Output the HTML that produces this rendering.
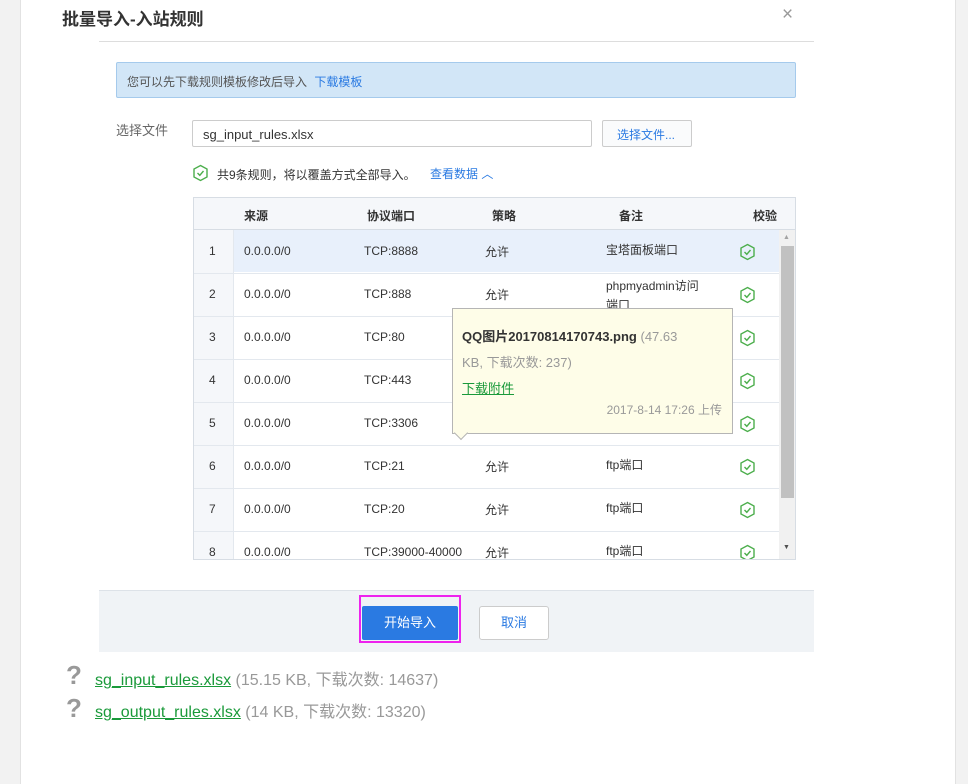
<!DOCTYPE html>
<html><head><meta charset="utf-8"><style>
*{box-sizing:border-box;margin:0;padding:0}
body{width:968px;height:784px;position:relative;background:#fff;font-family:"Liberation Sans","Noto Sans CJK SC",sans-serif;font-size:12px;color:#333;overflow:hidden}
.a{position:absolute}
.hex{position:absolute;width:17px;height:18px}
</style></head><body>
<div class="a" style="left:0;top:0;width:21px;height:784px;background:#f2f2f2;border-right:1px solid #e2e2e2"></div>
<div class="a" style="left:955px;top:0;width:13px;height:784px;background:#f2f2f2;border-left:1px solid #e2e2e2"></div>

<div class="a" style="left:62px;top:5px;font-size:17px;font-weight:bold;color:#333">批量导入-入站规则</div>
<div class="a" style="left:782px;top:4px;font-size:19px;color:#999">×</div>
<div class="a" style="left:99px;top:41px;width:715px;height:1px;background:#ddd"></div>

<div class="a" style="left:116px;top:62px;width:680px;height:36px;background:#d2e6f7;border:1px solid #a5caec;border-radius:2px;padding:10px 0 0 10px;color:#555">您可以先下载规则模板修改后导入 <span style="color:#2a7ae2;margin-left:4px">下载模板</span></div>

<div class="a" style="left:116px;top:120px;font-size:13px;color:#666">选择文件</div>
<div class="a" style="left:192px;top:120px;width:400px;height:27px;border:1px solid #ccc;border-radius:2px;padding:6px 0 0 10px;font-size:13px;color:#333">sg_input_rules.xlsx</div>
<div class="a" style="left:602px;top:120px;width:90px;height:27px;border:1px solid #ccc;border-radius:2px;background:#fafbfc;padding:5px 0 0 14px;color:#2a7ae2">选择文件...</div>

<svg class="hex" style="left:192px;top:164px" viewBox="0 0 17 18"><path d="M8.5 1.5 L15 5 V13 L8.5 16.5 L2 13 V5 Z" fill="none" stroke="#4cae4c" stroke-width="1.4"/><path d="M5.5 9 L7.8 11.3 L11.5 7" fill="none" stroke="#4cae4c" stroke-width="1.4"/></svg>
<div class="a" style="left:217px;top:166px;color:#333">共9条规则，将以覆盖方式全部导入。</div>
<div class="a" style="left:430px;top:165px;color:#2a7ae2">查看数据 ︿</div>

<div class="a" style="left:193px;top:197px;width:603px;height:363px;border:1px solid #d7dde4;background:#fff;overflow:hidden">
 <div class="a" style="left:0;top:0;width:40px;height:363px;background:#f5f7fa;border-right:1px solid #e3e8ee"></div>
 <div class="a" style="left:0;top:0;width:603px;height:32px;background:#f5f7fa;border-bottom:1px solid #d7dde4"></div>
 <div class="a" style="left:40px;top:32px;width:545px;height:42px;background:#e8f0fb"></div>
 <div class="a" style="top:9px;left:50px;font-weight:bold">来源</div>
 <div class="a" style="top:9px;left:173px;font-weight:bold">协议端口</div>
 <div class="a" style="top:9px;left:298px;font-weight:bold">策略</div>
 <div class="a" style="top:9px;left:425px;font-weight:bold">备注</div>
 <div class="a" style="top:9px;left:559px;font-weight:bold">校验</div>
 <div id="rows"></div>
 <div class="a" style="left:585px;top:32px;width:17px;height:331px;background:#f1f1f1"></div>
 <div class="a" style="left:587px;top:48px;width:13px;height:252px;background:#c1c1c1"></div>
 <div class="a" style="left:589px;top:36px;font-size:7px;color:#a3a3a3">▲</div>
 <div class="a" style="left:589px;top:346px;font-size:7px;color:#505050">▼</div>
</div>

<div class="a" style="left:452px;top:308px;width:281px;height:126px;background:#fefde8;border:1px solid #b5b5b5;padding:15px 0 0 9px;line-height:26px;color:#999;font-size:13px">
<b style="color:#333">QQ图片20170814170743.png</b> (47.63<br>KB, 下载次数: 237)<br><span style="color:#1a9a3a;text-decoration:underline">下载附件</span>
<div style="position:absolute;right:10px;top:88px;font-size:12px">2017-8-14 17:26 上传</div>
</div>
<div class="a" style="left:456px;top:428px;width:10px;height:10px;background:#fefde8;border-right:1px solid #b5b5b5;border-bottom:1px solid #b5b5b5;transform:rotate(45deg)"></div>

<div class="a" style="left:99px;top:590px;width:715px;height:62px;background:#f0f3f6;border-top:1px solid #dde2e8"></div>
<div class="a" style="left:359px;top:595px;width:102px;height:48px;border:2px solid #ee22ee"></div>
<div class="a" style="left:362px;top:606px;width:96px;height:34px;background:#2a7ae2;border-radius:2px;color:#fff;font-size:13px;text-align:center;line-height:34px">开始导入</div>
<div class="a" style="left:479px;top:606px;width:70px;height:34px;background:#fff;border:1px solid #ccc;border-radius:3px;color:#2a7ae2;font-size:13px;text-align:center;line-height:32px">取消</div>

<div class="a" style="left:66px;top:662px;font-size:26px;font-weight:bold;color:#999;line-height:26px">?</div>
<div class="a" style="left:66px;top:695px;font-size:26px;font-weight:bold;color:#999;line-height:26px">?</div>
<div class="a" style="left:95px;top:666px;font-size:16px;color:#999"><span style="color:#1a9a3a;text-decoration:underline">sg_input_rules.xlsx</span> (15.15 KB, 下载次数: 14637)</div>
<div class="a" style="left:95px;top:698px;font-size:16px;color:#999"><span style="color:#1a9a3a;text-decoration:underline">sg_output_rules.xlsx</span> (14 KB, 下载次数: 13320)</div>

<script>
var d=[["TCP:8888","宝塔面板端口"],["TCP:888","phpmyadmin访问<br>端口"],["TCP:80",""],["TCP:443",""],["TCP:3306",""],["TCP:21","ftp端口"],["TCP:20","ftp端口"],["TCP:39000-40000","ftp端口"]];
var h="";
for(var i=0;i<8;i++){var t=32+i*43;var c=t+21;
h+='<div class="a" style="left:0;top:'+(t+43)+'px;width:585px;height:1px;background:#e3e8ee"></div>';
h+='<div class="a" style="left:15px;top:'+(c-7)+'px">'+(i+1)+'</div>';
h+='<div class="a" style="left:50px;top:'+(c-7)+'px">0.0.0.0/0</div>';
h+='<div class="a" style="left:170px;top:'+(c-7)+'px">'+d[i][0]+'</div>';
h+='<div class="a" style="left:291px;top:'+(c-8)+'px">允许</div>';
h+='<div class="a" style="left:412px;top:'+(i==1?c-17:c-10)+'px;line-height:19px">'+d[i][1]+'</div>';
h+='<svg class="hex" style="left:545px;top:'+(c-8)+'px" viewBox="0 0 17 18"><path d="M8.5 1.5 L15 5 V13 L8.5 16.5 L2 13 V5 Z" fill="none" stroke="#4cae4c" stroke-width="1.4"/><path d="M5.5 9 L7.8 11.3 L11.5 7" fill="none" stroke="#4cae4c" stroke-width="1.4"/></svg>';}
document.getElementById("rows").innerHTML=h;
</script>
</body></html>
